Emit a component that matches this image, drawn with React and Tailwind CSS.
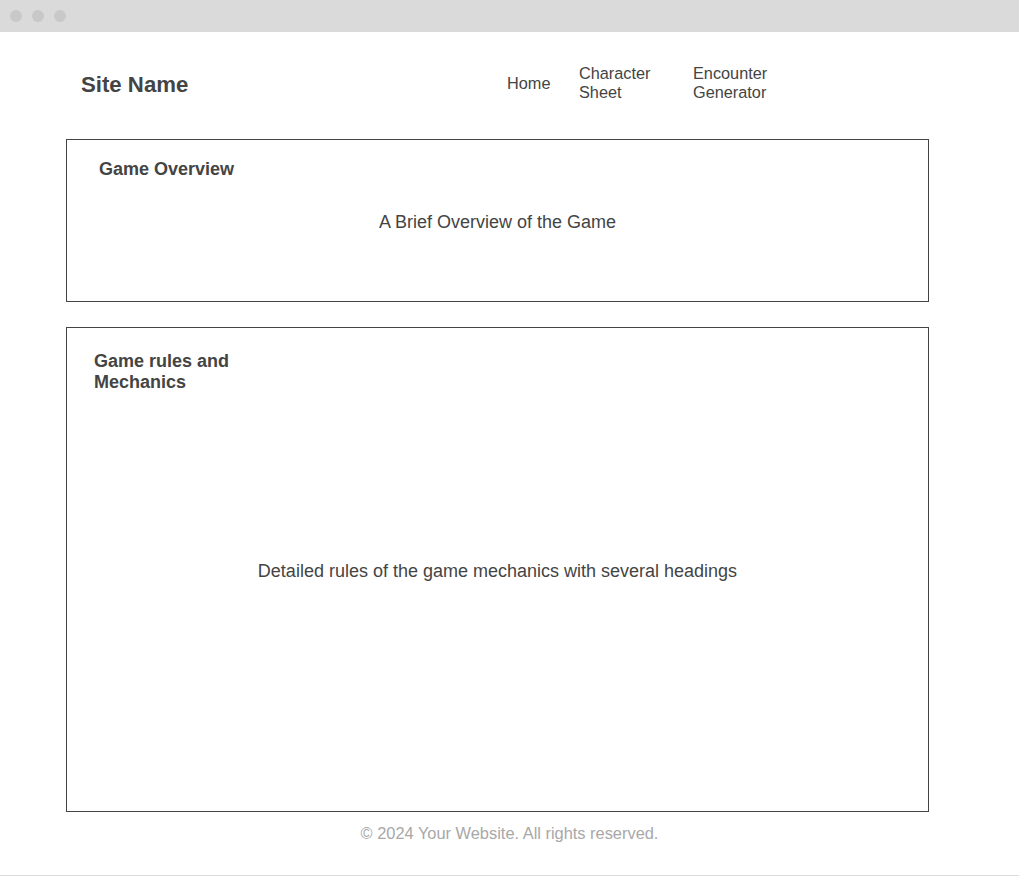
import React from "react";

const navItems = [
  { label: "Home", width: "w-[72px]" },
  { label: "Character Sheet", width: "w-[114px]" },
  { label: "Encounter Generator", width: "w-[100px]" },
];

function Panel({ title, titlePad, body, height }) {
  return (
    <section className={`grid ${height} w-[863px] ml-[66px] border border-[#444] bg-white`}>
      <h2
        className={`col-start-1 row-start-1 self-start justify-self-start max-w-[190px] text-[18px] leading-[21px] font-bold text-[#444] ${titlePad}`}
      >
        {title}
      </h2>
      <p className="col-start-1 row-start-1 self-center justify-self-center pt-[4px] text-[18px] leading-[21px] text-[#444]">
        {body}
      </p>
    </section>
  );
}

export default function App() {
  return (
    <div className="min-h-[876px] bg-white flex flex-col" style={{ fontFamily: '"Liberation Sans", Arial, sans-serif' }}>
      <div className="h-8 bg-[#dadada] flex items-center gap-[10px] pl-[10px]">
        <span className="w-3 h-3 rounded-full bg-[#c8c8c8]" />
        <span className="w-3 h-3 rounded-full bg-[#c8c8c8]" />
        <span className="w-3 h-3 rounded-full bg-[#c8c8c8]" />
      </div>

      <header className="flex items-center pl-[81px] pt-[32px] pb-[37px]">
        <h1 className="text-[22.2px] leading-[26px] pt-[4px] font-bold text-[#444] w-[426px]">Site Name</h1>
        <nav className="flex items-center">
          {navItems.map((n) => (
            <a key={n.label} className={`${n.width} text-[16.3px] leading-[19px] text-[#444]`}>
              {n.label}
            </a>
          ))}
        </nav>
      </header>

      <main className="flex flex-col gap-[25px]">
        <Panel
          title="Game Overview"
          titlePad="pl-[32px] pt-[19px]"
          body="A Brief Overview of the Game"
          height="h-[163px]"
        />
        <Panel
          title="Game rules and Mechanics"
          titlePad="pl-[27px] pt-[23px]"
          body="Detailed rules of the game mechanics with several headings"
          height="h-[485px]"
        />
      </main>

      <footer className="flex-1 flex justify-center pt-[12px] border-b border-[#dcdcdc]">
        <p className="text-[16.4px] leading-[19px] text-[#a8a8a8]">© 2024 Your Website. All rights reserved.</p>
      </footer>
    </div>
  );
}
